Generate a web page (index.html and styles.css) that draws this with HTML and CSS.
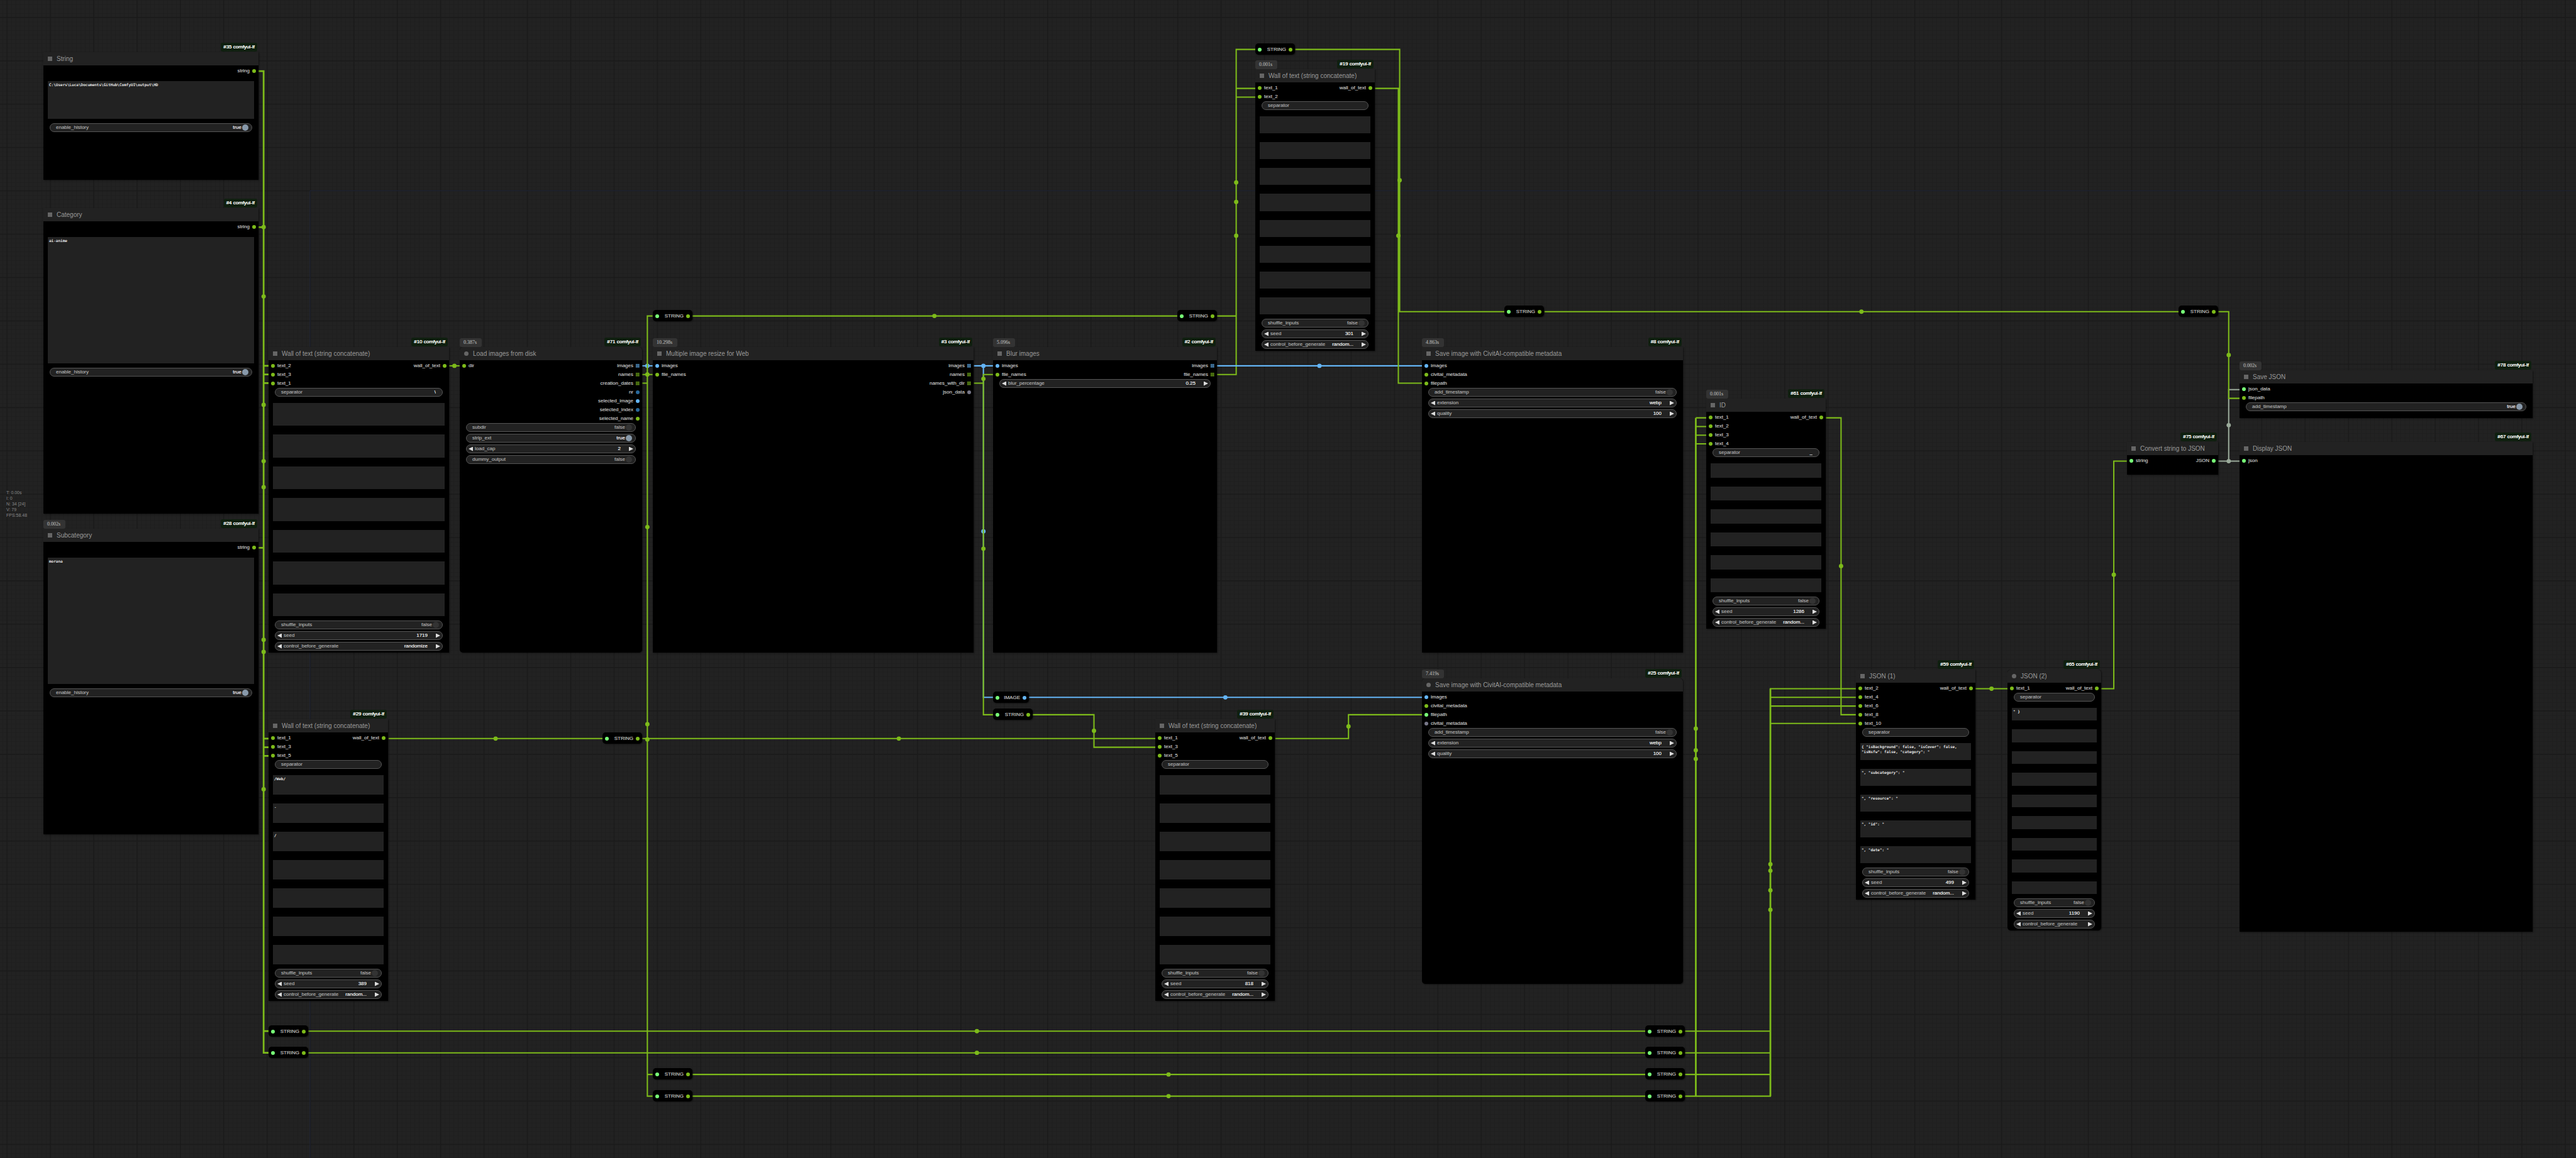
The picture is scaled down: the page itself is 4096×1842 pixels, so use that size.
FILE: index.html
```html
<!DOCTYPE html>
<html lang="en">
<head>
<meta charset="utf-8">
<title>ComfyUI workflow</title>
<link rel="stylesheet" href="styles.css">
</head>
<body>
<main class="graph">

<!-- grid and links, in graph units -->
<svg class="links" aria-hidden="true">
  <defs>
    <pattern id="minor" x="6" y="0" width="10" height="10" patternUnits="userSpaceOnUse"><path class="grid-minor" d="M0 .5H10M.5 0V10"/></pattern>
    <pattern id="major" x="15" y="39" width="100" height="100" patternUnits="userSpaceOnUse"><path class="grid-major" d="M0 1H100M1 0V100"/></pattern>
  </defs>
  <g transform="scale(.68945)">
    <rect width="12000" height="6000" fill="url(#minor)"/>
    <rect width="12000" height="6000" fill="url(#major)"/>
    <path class="axis" d="M715 6000V440H12000"/>

    <path class="bus str" d="M596 164H608V2429H620M596 524H608M596 1264H608M608 844H620M608 864H620M608 884H620M608 1704H620M608 1724H620M608 1744H620M608 2379H620"/>
    <path class="str" d="M1036 844H1060"/>
    <path class="img" d="M1481 844H1505"/>
    <circle class="img" cx="1493" cy="844" r="5"/>
    <path class="str" d="M1481 864H1505M1481 884H1493M1505 729H1493V2529H1505M1493 2479H1505"/>
    <path class="str" d="M896 1704H1390M1481 1704H2665M1596 729H2715"/>
    <path class="str" d="M2806 729H2851V864H2806M2851 864V114H2895M2851 204H2895M2851 224H2895"/>
    <path class="img" d="M2246 844H2290M2268 844V1609H2290M2806 844H3280M2373 1609H3280"/>
    <circle class="img" cx="2268" cy="844" r="5"/>
    <circle class="img" cx="2268" cy="1226" r="5"/>
    <circle class="img" cx="3043" cy="844" r="5"/>
    <circle class="img" cx="2826" cy="1609" r="5"/>
    <path class="str" d="M2246 884H2268V1649H2290M2268 884V864H2290"/>
    <path class="str" d="M2987 114H3228V719H3470M3171 204H3225V884H3280"/>
    <path class="str" d="M3562 719H5025M2381 1649H2523V1724H2665M2941 1704H3110V1649H3280"/>
    <path class="str" d="M711 2379H3795M711 2429H3795M1596 2479H3795M1596 2529H3795"/>
    <path class="str" d="M3886 2379H4083V1609H4280M3886 2429H4083V1589H4280M3886 2479H4083V1629H4280M3886 2529H4083V1669H4280"/>
    <path class="bus str" d="M4083 1589V2529M3911 964V2529"/>
    <path class="str" d="M3911 964H3935M3911 984H3935M3911 1004H3935M3911 1024H3935"/>
    <path class="str" d="M4211 964H4246V1649H4280M4556 1589H4630M4846 1589H4875V1064H4905"/>
    <path class="json" d="M5116 1064H5165M5140 1064V899H5165"/>
    <circle class="json" cx="5140" cy="1064" r="5"/>
    <circle class="json" cx="5140" cy="981" r="5"/>
    <path class="str" d="M5116 719H5140V919H5165"/>
    <g class="str">
      <circle cx="608" cy="524" r="5"/><circle cx="608" cy="684" r="5"/><circle cx="608" cy="934" r="5"/><circle cx="608" cy="1064" r="5"/>
      <circle cx="608" cy="1124" r="5"/><circle cx="608" cy="1476" r="5"/><circle cx="608" cy="1504" r="5"/><circle cx="608" cy="1821" r="5"/>
      <circle cx="1048" cy="844" r="5"/><circle cx="1493" cy="864" r="5"/><circle cx="1493" cy="1216" r="5"/><circle cx="1493" cy="1671" r="5"/><circle cx="1493" cy="1706" r="5"/>
      <circle cx="1143" cy="1704" r="5"/><circle cx="2073" cy="1704" r="5"/><circle cx="2155" cy="729" r="5"/>
      <circle cx="2851" cy="421" r="5"/><circle cx="2851" cy="466" r="5"/><circle cx="2851" cy="544" r="5"/>
      <circle cx="2268" cy="874" r="5"/><circle cx="2268" cy="1266" r="5"/>
      <circle cx="3228" cy="416" r="5"/><circle cx="3225" cy="544" r="5"/><circle cx="4293" cy="719" r="5"/><circle cx="5140" cy="819" r="5"/>
      <circle cx="2523" cy="1686" r="5"/><circle cx="3110" cy="1676" r="5"/>
      <circle cx="2253" cy="2379" r="5"/><circle cx="2253" cy="2429" r="5"/><circle cx="2695" cy="2479" r="5"/><circle cx="2695" cy="2529" r="5"/>
      <circle cx="3911" cy="1681" r="5"/><circle cx="3911" cy="1731" r="5"/><circle cx="3911" cy="1751" r="5"/>
      <circle cx="4083" cy="1994" r="5"/><circle cx="4083" cy="2009" r="5"/><circle cx="4083" cy="2054" r="5"/><circle cx="4083" cy="2099" r="5"/>
      <circle cx="4246" cy="1306" r="5"/><circle cx="4593" cy="1589" r="5"/><circle cx="4875" cy="1326" r="5"/>
    </g>
  </g>
</svg>

<section class="node n35">
  <span class="badge">#35 comfyui-lf</span>
  <h2>String</h2>
  <div class="io"><ul class="out"><li>string</li></ul></div>
  <textarea class="text short" aria-label="string">C:\Users\Luca\Documents\GitHub\ComfyUI\output\HD</textarea>
  <label class="w toggle">enable_history<b>true</b><input type="checkbox" checked></label>
</section>

<section class="node n4">
  <span class="badge">#4 comfyui-lf</span>
  <h2>Category</h2>
  <div class="io"><ul class="out"><li>string</li></ul></div>
  <textarea class="text tall" aria-label="string">ai-anime</textarea>
  <label class="w toggle">enable_history<b>true</b><input type="checkbox" checked></label>
</section>

<section class="node n28">
  <span class="time">0.002s</span><span class="badge">#28 comfyui-lf</span>
  <h2>Subcategory</h2>
  <div class="io"><ul class="out"><li>string</li></ul></div>
  <textarea class="text tall" aria-label="string">morana</textarea>
  <label class="w toggle">enable_history<b>true</b><input type="checkbox" checked></label>
</section>

<section class="node n10">
  <span class="badge">#10 comfyui-lf</span>
  <h2>Wall of text (string concatenate)</h2>
  <div class="io"><ul class="in"><li>text_2</li><li>text_3</li><li>text_1</li></ul><ul class="out"><li>wall_of_text</li></ul></div>
  <label class="w">separator<input value="\"></label>
  <div class="areas"><textarea aria-label="text_4"></textarea><textarea aria-label="text_5"></textarea><textarea aria-label="text_6"></textarea><textarea aria-label="text_7"></textarea><textarea aria-label="text_8"></textarea><textarea aria-label="text_9"></textarea><textarea aria-label="text_10"></textarea></div>
  <label class="w toggle">shuffle_inputs<span>false</span><input type="checkbox"></label>
  <div class="w num"><button aria-label="less"></button><label for="seed10">seed</label><input id="seed10" value="1719"><button class="next" aria-label="more"></button></div>
  <div class="w num"><button aria-label="previous"></button><label for="ctl10">control_before_generate</label><select id="ctl10"><option>randomize</option></select><button class="next" aria-label="next"></button></div>
</section>

<section class="node round n71">
  <span class="time">0.387s</span><span class="badge">#71 comfyui-lf</span>
  <h2>Load images from disk</h2>
  <div class="io"><ul class="in"><li>dir</li></ul><ul class="out"><li class="img list">images</li><li class="list">names</li><li class="list">creation_dates</li><li class="int">nr</li><li class="img">selected_image</li><li class="int">selected_index</li><li>selected_name</li></ul></div>
  <label class="w toggle">subdir<span>false</span><input type="checkbox"></label>
  <label class="w toggle">strip_ext<b>true</b><input type="checkbox" checked></label>
  <div class="w num"><button aria-label="less"></button><label for="cap">load_cap</label><input id="cap" value="2"><button class="next" aria-label="more"></button></div>
  <label class="w toggle">dummy_output<span>false</span><input type="checkbox"></label>
</section>

<section class="node n3">
  <span class="time">10.298s</span><span class="badge">#3 comfyui-lf</span>
  <h2>Multiple image resize for Web</h2>
  <div class="io"><ul class="in"><li class="img">images</li><li>file_names</li></ul><ul class="out"><li class="img list">images</li><li class="list">names</li><li class="list">names_with_dir</li><li class="none">json_data</li></ul></div>
</section>

<section class="node n2">
  <span class="time">5.096s</span><span class="badge">#2 comfyui-lf</span>
  <h2>Blur images</h2>
  <div class="io"><ul class="in"><li class="img">images</li><li>file_names</li></ul><ul class="out"><li class="img list">images</li><li class="list">file_names</li></ul></div>
  <div class="w num"><button aria-label="less"></button><label for="blur">blur_percentage</label><input id="blur" value="0.25"><button class="next" aria-label="more"></button></div>
</section>

<section class="node n19">
  <span class="time">0.001s</span><span class="badge">#19 comfyui-lf</span>
  <h2>Wall of text (string concatenate)</h2>
  <div class="io"><ul class="in"><li>text_1</li><li>text_2</li></ul><ul class="out"><li>wall_of_text</li></ul></div>
  <label class="w">separator<input value=""></label>
  <div class="areas"><textarea aria-label="text_3"></textarea><textarea aria-label="text_4"></textarea><textarea aria-label="text_5"></textarea><textarea aria-label="text_6"></textarea><textarea aria-label="text_7"></textarea><textarea aria-label="text_8"></textarea><textarea aria-label="text_9"></textarea><textarea aria-label="text_10"></textarea></div>
  <label class="w toggle">shuffle_inputs<span>false</span><input type="checkbox"></label>
  <div class="w num"><button aria-label="less"></button><label for="seed19">seed</label><input id="seed19" value="301"><button class="next" aria-label="more"></button></div>
  <div class="w num"><button aria-label="previous"></button><label for="ctl19">control_before_generate</label><select id="ctl19"><option>random...</option></select><button class="next" aria-label="next"></button></div>
</section>

<section class="node n8">
  <span class="time">4.863s</span><span class="badge">#8 comfyui-lf</span>
  <h2>Save image with CivitAI-compatible metadata</h2>
  <div class="io"><ul class="in"><li class="img">images</li><li>civitai_metadata</li><li>filepath</li></ul></div>
  <label class="w toggle">add_timestamp<span>false</span><input type="checkbox"></label>
  <div class="w num"><button aria-label="previous"></button><label for="ext8">extension</label><select id="ext8"><option>webp</option></select><button class="next" aria-label="next"></button></div>
  <div class="w num"><button aria-label="less"></button><label for="q8">quality</label><input id="q8" value="100"><button class="next" aria-label="more"></button></div>
</section>

<section class="node round n25">
  <span class="time">7.419s</span><span class="badge">#25 comfyui-lf</span>
  <h2>Save image with CivitAI-compatible metadata</h2>
  <div class="io"><ul class="in"><li class="img">images</li><li>civitai_metadata</li><li class="any">filepath</li><li class="none">civitai_metadata</li></ul></div>
  <label class="w toggle">add_timestamp<span>false</span><input type="checkbox"></label>
  <div class="w num"><button aria-label="previous"></button><label for="ext25">extension</label><select id="ext25"><option>webp</option></select><button class="next" aria-label="next"></button></div>
  <div class="w num"><button aria-label="less"></button><label for="q25">quality</label><input id="q25" value="100"><button class="next" aria-label="more"></button></div>
</section>

<section class="node n61">
  <span class="time">0.001s</span><span class="badge">#61 comfyui-lf</span>
  <h2>ID</h2>
  <div class="io"><ul class="in"><li>text_1</li><li>text_2</li><li>text_3</li><li>text_4</li></ul><ul class="out"><li>wall_of_text</li></ul></div>
  <label class="w">separator<input value="_"></label>
  <div class="areas"><textarea aria-label="text_5"></textarea><textarea aria-label="text_6"></textarea><textarea aria-label="text_7"></textarea><textarea aria-label="text_8"></textarea><textarea aria-label="text_9"></textarea><textarea aria-label="text_10"></textarea></div>
  <label class="w toggle">shuffle_inputs<span>false</span><input type="checkbox"></label>
  <div class="w num"><button aria-label="less"></button><label for="seed61">seed</label><input id="seed61" value="1286"><button class="next" aria-label="more"></button></div>
  <div class="w num"><button aria-label="previous"></button><label for="ctl61">control_before_generate</label><select id="ctl61"><option>random...</option></select><button class="next" aria-label="next"></button></div>
</section>

<section class="node n29">
  <span class="badge">#29 comfyui-lf</span>
  <h2>Wall of text (string concatenate)</h2>
  <div class="io"><ul class="in"><li>text_1</li><li>text_3</li><li>text_5</li></ul><ul class="out"><li>wall_of_text</li></ul></div>
  <label class="w">separator<input value=""></label>
  <div class="areas"><textarea aria-label="text_2">/Web/</textarea><textarea aria-label="text_4">-</textarea><textarea aria-label="text_6">/</textarea><textarea aria-label="text_7"></textarea><textarea aria-label="text_8"></textarea><textarea aria-label="text_9"></textarea><textarea aria-label="text_10"></textarea></div>
  <label class="w toggle">shuffle_inputs<span>false</span><input type="checkbox"></label>
  <div class="w num"><button aria-label="less"></button><label for="seed29">seed</label><input id="seed29" value="389"><button class="next" aria-label="more"></button></div>
  <div class="w num"><button aria-label="previous"></button><label for="ctl29">control_before_generate</label><select id="ctl29"><option>random...</option></select><button class="next" aria-label="next"></button></div>
</section>

<section class="node n39">
  <span class="badge">#39 comfyui-lf</span>
  <h2>Wall of text (string concatenate)</h2>
  <div class="io"><ul class="in"><li>text_1</li><li>text_3</li><li>text_5</li></ul><ul class="out"><li>wall_of_text</li></ul></div>
  <label class="w">separator<input value=""></label>
  <div class="areas"><textarea aria-label="text_2"></textarea><textarea aria-label="text_4"></textarea><textarea aria-label="text_6"></textarea><textarea aria-label="text_7"></textarea><textarea aria-label="text_8"></textarea><textarea aria-label="text_9"></textarea><textarea aria-label="text_10"></textarea></div>
  <label class="w toggle">shuffle_inputs<span>false</span><input type="checkbox"></label>
  <div class="w num"><button aria-label="less"></button><label for="seed39">seed</label><input id="seed39" value="818"><button class="next" aria-label="more"></button></div>
  <div class="w num"><button aria-label="previous"></button><label for="ctl39">control_before_generate</label><select id="ctl39"><option>random...</option></select><button class="next" aria-label="next"></button></div>
</section>

<section class="node n59">
  <span class="badge">#59 comfyui-lf</span>
  <h2>JSON (1)</h2>
  <div class="io"><ul class="in"><li>text_2</li><li>text_4</li><li>text_6</li><li>text_8</li><li>text_10</li></ul><ul class="out"><li>wall_of_text</li></ul></div>
  <label class="w">separator<input value=""></label>
  <div class="areas"><textarea aria-label="text_1">{ "isBackground": false, "isCover": false,
"isNsfw": false, "category": "</textarea><textarea aria-label="text_3">", "subcategory": "</textarea><textarea aria-label="text_5">", "resource": "</textarea><textarea aria-label="text_7">", "id": "</textarea><textarea aria-label="text_9">", "date": "</textarea></div>
  <label class="w toggle">shuffle_inputs<span>false</span><input type="checkbox"></label>
  <div class="w num"><button aria-label="less"></button><label for="seed59">seed</label><input id="seed59" value="499"><button class="next" aria-label="more"></button></div>
  <div class="w num"><button aria-label="previous"></button><label for="ctl59">control_before_generate</label><select id="ctl59"><option>random...</option></select><button class="next" aria-label="next"></button></div>
</section>

<section class="node round n65">
  <span class="badge">#65 comfyui-lf</span>
  <h2>JSON (2)</h2>
  <div class="io"><ul class="in"><li>text_1</li></ul><ul class="out"><li>wall_of_text</li></ul></div>
  <label class="w">separator<input value=""></label>
  <div class="areas"><textarea aria-label="text_2">" }</textarea><textarea aria-label="text_3"></textarea><textarea aria-label="text_4"></textarea><textarea aria-label="text_5"></textarea><textarea aria-label="text_6"></textarea><textarea aria-label="text_7"></textarea><textarea aria-label="text_8"></textarea><textarea aria-label="text_9"></textarea><textarea aria-label="text_10"></textarea></div>
  <label class="w toggle">shuffle_inputs<span>false</span><input type="checkbox"></label>
  <div class="w num"><button aria-label="less"></button><label for="seed65">seed</label><input id="seed65" value="1190"><button class="next" aria-label="more"></button></div>
  <div class="w num"><button aria-label="previous"></button><label for="ctl65">control_before_generate</label><select id="ctl65"><option></option></select><button class="next" aria-label="next"></button></div>
</section>

<section class="node n75">
  <span class="badge">#75 comfyui-lf</span>
  <h2>Convert string to JSON</h2>
  <div class="io"><ul class="in"><li class="any">string</li></ul><ul class="out"><li class="any">JSON</li></ul></div>
</section>

<section class="node n78">
  <span class="time">0.002s</span><span class="badge">#78 comfyui-lf</span>
  <h2>Save JSON</h2>
  <div class="io"><ul class="in"><li class="any">json_data</li><li>filepath</li></ul></div>
  <label class="w toggle">add_timestamp<b>true</b><input type="checkbox" checked></label>
</section>

<section class="node n67">
  <span class="badge">#67 comfyui-lf</span>
  <h2>Display JSON</h2>
  <div class="io"><ul class="in"><li class="any">json</li></ul></div>
</section>

<div class="reroute r1">STRING</div>
<div class="reroute r2">STRING</div>
<div class="reroute r3">STRING</div>
<div class="reroute r4">STRING</div>
<div class="reroute r5">STRING</div>
<div class="reroute r6">STRING</div>
<div class="reroute img r7">IMAGE</div>
<div class="reroute r8">STRING</div>
<div class="reroute r9">STRING</div>
<div class="reroute r10">STRING</div>
<div class="reroute r11">STRING</div>
<div class="reroute r12">STRING</div>
<div class="reroute r13">STRING</div>
<div class="reroute r14">STRING</div>
<div class="reroute r15">STRING</div>
<div class="reroute r16">STRING</div>

<div class="stats"><div>T: 0.00s</div><div>I: 0</div><div>N: 34 [24]</div><div>V: 79</div><div>FPS:58.48</div></div>
</main>
</body>
</html>
```
FILE: styles.css
```css
:root {
  --string: #7dbb1a;
  --image: #64b5f6;
  --int: #29699c;
  --json: #9aaa9a;
  --any: #77ff77;
  --none: #778;
}

* { box-sizing: border-box; }

body {
  margin: 0;
  background: #222;
  color: #aaa;
  font: 8px/14px "Liberation Sans", Arial, sans-serif;
}

.graph {
  position: relative;
  width: 100%;
  height: 100vh;
  overflow: hidden;
}

/* links */
.links {
  position: absolute;
  inset: 0;
  width: 100%;
  height: 100%;
}
.links path { fill: none; stroke-width: 3; }
.links path.bus { stroke-width: 4; }
.links path.str { stroke: var(--string); }
.links path.img { stroke: var(--image); }
.links path.json { stroke: var(--json); }
.links .str circle { fill: var(--string); }
.links circle.img { fill: var(--image); }
.links circle.json { fill: var(--json); }
.links .grid-minor { stroke: #1c1c1c; stroke-width: 1; }
.links .grid-major { stroke: #1a1a1a; stroke-width: 2; }
.links .axis { stroke: #222a44; stroke-width: 1; }

/* nodes */
.node {
  position: absolute;
  display: flex;
  flex-direction: column;
  background: #000;
  padding-bottom: 3px;
  box-shadow: 1px 1px 2px rgba(0, 0, 0, .5);
}
.node, .reroute { text-shadow: 0 0 currentColor; }
.node h2 {
  display: flex;
  align-items: center;
  gap: 7px;
  flex: none;
  height: 21px;
  margin: 0 0 2px;
  padding-left: 7px;
  background: #222;
  color: #999;
  font-size: 10px;
  font-weight: 400;
  white-space: nowrap;
  text-shadow: none;
}
.node h2::before {
  content: "";
  width: 7px;
  height: 7px;
  background: #666;
}
.round, .reroute { border-radius: 5px; }
.round h2 { border-radius: 5px 5px 0 0; }
.round h2::before { border-radius: 50%; }

.badge, .time {
  position: absolute;
  height: 14px;
  border-radius: 3px;
  white-space: nowrap;
}
.badge {
  top: -15px;
  right: 2px;
  padding: 0 4px;
  background: #0f1f0f;
  color: #fff;
}
.time {
  top: -14px;
  left: 0;
  padding: 0 8px 0 6px;
  background: #333;
  color: #999;
  font-family: "Liberation Serif", "Times New Roman", serif;
}

/* slots */
.io {
  display: flex;
  justify-content: space-between;
  flex: none;
}
.io ul {
  margin: 0;
  padding: 0 4px;
  list-style: none;
}
.io li {
  --slot: var(--string);
  display: flex;
  align-items: center;
  gap: 4px;
  height: 14px;
}
.io .out { margin-left: auto; }
.io .out li { justify-content: flex-end; }
.io .in li::before, .io .out li::after {
  content: "";
  width: 6px;
  height: 6px;
  border-radius: 50%;
  background: var(--slot);
}
.io li.img { --slot: var(--image); }
.io li.int { --slot: var(--int); }
.io li.any { --slot: var(--any); }
.io li.none { --slot: var(--none); }
.io .out li.list::after {
  border-radius: 0;
  background:
    repeating-linear-gradient(90deg, transparent 0 1px, rgba(0, 0, 0, .5) 1px 2px),
    repeating-linear-gradient(transparent 0 1px, rgba(0, 0, 0, .5) 1px 2px),
    var(--slot);
}

/* widgets */
.w {
  display: flex;
  align-items: center;
  flex: none;
  height: 14px;
  margin: 0 10px;
  padding: 0 10px 0 9px;
  border: 1px solid #555;
  border-radius: 7px;
  background: #222;
  color: #999;
  line-height: 12px;
}
.w + .w { margin-top: 3px; }
.w input, .w select {
  flex: 1;
  width: 0;
  min-width: 0;
  height: 12px;
  margin: 0;
  padding: 0;
  border: 0;
  background: none;
  color: #ddd;
  font: inherit;
  text-align: right;
  text-align-last: right;
  text-shadow: 0 0 currentColor;
  appearance: none;
}
.toggle { padding-right: 5px; }
.toggle b, .toggle span {
  margin: 0 1px 0 auto;
  font-weight: 400;
}
.toggle b {
  color: #ddd;
  text-shadow: 0 0 currentColor;
}
.w.toggle input {
  flex: none;
  width: 10px;
  height: 10px;
  border-radius: 50%;
  background: #333;
}
.w.toggle input:checked { background: #89a; }
.num { padding: 0 3px; }
.num label { margin-left: 3px; }
.num button {
  flex: none;
  width: 7px;
  height: 7px;
  padding: 0;
  border: 0;
  background: #ddd;
  clip-path: polygon(0 50%, 100% 0, 100% 100%);
}
.num .next {
  margin-left: 13px;
  clip-path: polygon(0 0, 100% 50%, 0 100%);
}

textarea {
  display: block;
  margin: 0;
  padding: 2px;
  border: 0;
  background: #222;
  color: #ddd;
  font: 6px/8px "DejaVu Sans Mono", monospace;
  text-shadow: 0 0 currentColor;
  resize: none;
  overflow: hidden;
}
.text { flex: none; margin: 9px 7px 7px; }
.short { height: 60px; }
.tall { height: 201px; }
.areas {
  display: flex;
  flex-direction: column;
  flex: 1;
  gap: 14px;
  margin: 10px 7px 7px;
  min-height: 0;
}
.areas textarea { flex: 1; min-height: 0; }

/* reroutes */
.reroute {
  position: absolute;
  display: flex;
  align-items: center;
  justify-content: space-between;
  width: 63px;
  height: 18px;
  padding: 1px 4px 0;
  background: #000;
  box-shadow: 1px 1px 2px rgba(0, 0, 0, .5);
}
.reroute::before, .reroute::after {
  content: "";
  width: 6px;
  height: 6px;
  border-radius: 50%;
  background: var(--any);
}
.reroute::before { margin-right: auto; }
.reroute::after { margin-left: 4px; background: var(--string); }
.reroute.img { width: 57px; }
.reroute.img::after { background: var(--image); }

.stats {
  position: absolute;
  left: 10px;
  top: 779px;
  color: #888;
  font-size: 7px;
  line-height: 9px;
}

/* placement on the canvas */
.n35 { left: 69px; top: 83px; width: 342px; height: 203px; }
.n4 { left: 69px; top: 331px; width: 342px; height: 486px; }
.n28 { left: 69px; top: 841px; width: 342px; height: 486px; }
.n10 { left: 427px; top: 552px; width: 287px; height: 486px; }
.n71 { left: 731px; top: 552px; width: 290px; height: 486px; }
.n3 { left: 1038px; top: 552px; width: 510px; height: 486px; }
.n2 { left: 1579px; top: 552px; width: 356px; height: 486px; }
.n19 { left: 1996px; top: 110px; width: 190px; height: 448px; }
.n8 { left: 2261px; top: 552px; width: 415px; height: 486px; }
.n25 { left: 2261px; top: 1079px; width: 415px; height: 486px; }
.n61 { left: 2713px; top: 634px; width: 190px; height: 366px; }
.n29 { left: 427px; top: 1144px; width: 190px; height: 448px; }
.n39 { left: 1837px; top: 1144px; width: 190px; height: 448px; }
.n59 { left: 2951px; top: 1065px; width: 190px; height: 366px; }
.n65 { left: 3192px; top: 1065px; width: 149px; height: 415px; }
.n75 { left: 3382px; top: 703px; width: 145px; height: 52px; }
.n78 { left: 3561px; top: 589px; width: 466px; height: 76px; }
.n67 { left: 3561px; top: 703px; width: 466px; height: 779px; }

.r1 { left: 1038px; top: 493px; }
.r2 { left: 1872px; top: 493px; }
.r3 { left: 1996px; top: 69px; }
.r4 { left: 2392px; top: 486px; }
.r5 { left: 3464px; top: 486px; }
.r6 { left: 958px; top: 1165px; }
.r7 { left: 1579px; top: 1100px; }
.r8 { left: 1579px; top: 1127px; }
.r9 { left: 427px; top: 1631px; }
.r10 { left: 427px; top: 1665px; }
.r11 { left: 1038px; top: 1699px; }
.r12 { left: 1038px; top: 1734px; }
.r13 { left: 2616px; top: 1631px; }
.r14 { left: 2616px; top: 1665px; }
.r15 { left: 2616px; top: 1699px; }
.r16 { left: 2616px; top: 1734px; }
```
